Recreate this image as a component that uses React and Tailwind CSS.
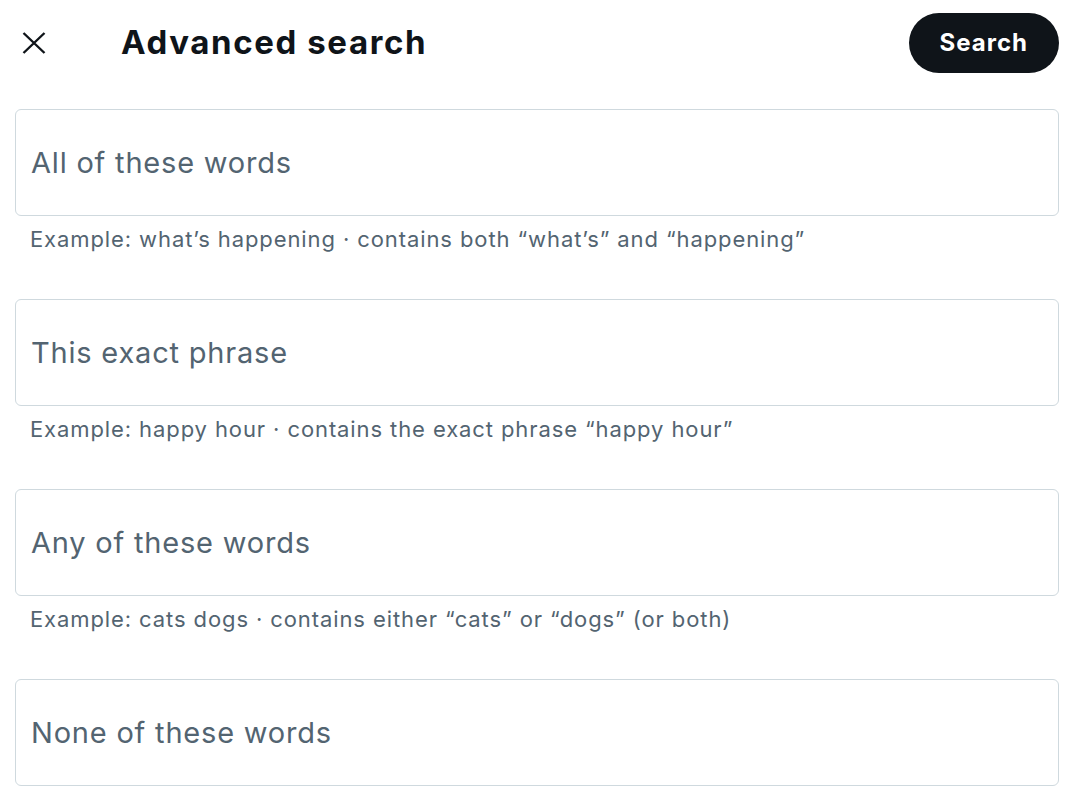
import React from 'react';

const fields = [
  {
    label: 'All of these words',
    example: 'Example: what\u2019s happening \u00b7 contains both \u201cwhat\u2019s\u201d and \u201chappening\u201d',
  },
  {
    label: 'This exact phrase',
    example: 'Example: happy hour \u00b7 contains the exact phrase \u201chappy hour\u201d',
  },
  {
    label: 'Any of these words',
    example: 'Example: cats dogs \u00b7 contains either \u201ccats\u201d or \u201cdogs\u201d (or both)',
  },
  {
    label: 'None of these words',
    example: '',
  },
];

const App = () => {
  return (
    <div
      className="w-[1082px] h-[798px] overflow-hidden bg-white"
      style={{ fontFamily: 'Inter, "Noto Sans", sans-serif' }}
    >
      <div className="h-[86px] flex items-center pl-[22px] pr-[23px]">
        <button className="w-6 h-6 flex items-center justify-center text-[#0f1419]">
          <svg viewBox="0 0 24 24" width="24" height="24" fill="none" stroke="currentColor" strokeWidth="2.4">
            <path d="M1.5 2L22.5 22M22.5 2L1.5 22" />
          </svg>
        </button>
        <h2 className="ml-[75px] text-[33px] font-bold text-[#0f1419] tracking-[1.6px]">
          Advanced search
        </h2>
        <button className="ml-auto h-[60px] px-[31px] rounded-full bg-[#0f1419] text-white text-[24px] font-bold tracking-[1px]">
          Search
        </button>
      </div>

      <div className="pl-[15px] pr-[23px] pt-[23px]">
        {fields.map((f) => (
          <div key={f.label} className="h-[190px]">
            <div className="h-[107px] border border-[#cfd9de] rounded-[6px] flex items-center px-[15px]">
              <input
                type="text"
                placeholder={f.label}
                className="w-full outline-none bg-transparent text-[29px] tracking-[0.8px] text-[#0f1419] placeholder:text-[#536471]"
              />
            </div>
            {f.example && (
              <p className="pt-[9px] pl-[15px] text-[22px] leading-[28px] tracking-[0.9px] text-[#536471]">
                {f.example}
              </p>
            )}
          </div>
        ))}
      </div>
    </div>
  );
};

export default App;
